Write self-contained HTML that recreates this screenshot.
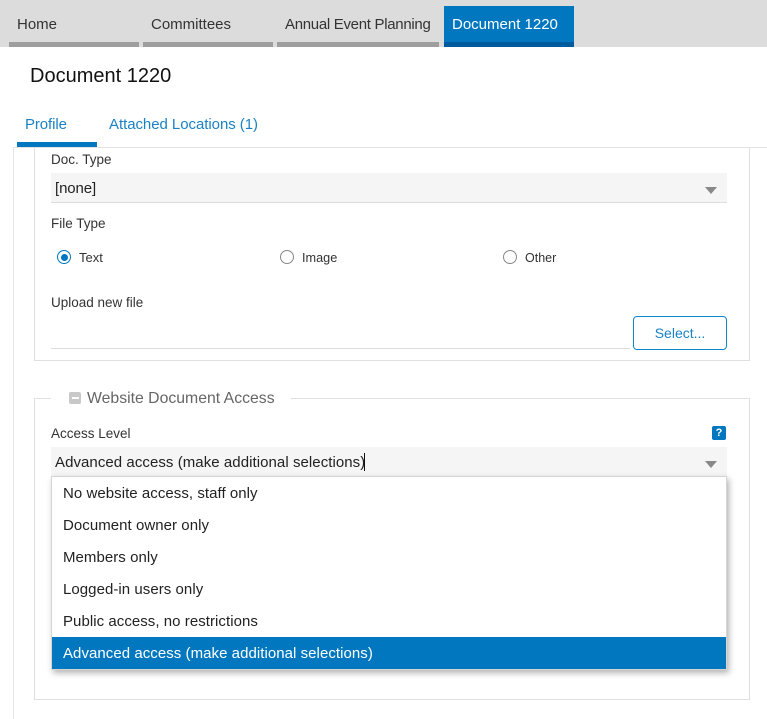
<!DOCTYPE html>
<html lang="en"><head><meta charset="utf-8"><title>Document 1220</title>
<style>
html,body{margin:0;padding:0;background:#fff;width:767px;height:719px;overflow:hidden}
body{position:relative;font-family:"Liberation Sans",sans-serif;color:#222}
div,span{position:absolute;box-sizing:border-box}
.t{white-space:nowrap;line-height:20px;height:20px}
.bar{top:42px;height:5px;background:#9e9e9e}
.lb{font-size:13.5px;color:#333}
.sel{left:51px;width:676px;background:#f5f5f5;border-bottom:1px solid #ddd}
.arrow{width:0;height:0;border-left:6.5px solid transparent;border-right:6.5px solid transparent;border-top:7px solid #888}
.radio{width:14px;height:14px;border-radius:50%;border:1.5px solid #888;background:#fff;top:250px}
.it{left:63px;font-size:15px;color:#222;letter-spacing:.05px}
</style></head><body>
<div style="left:0;top:0;width:767px;height:47px;background:#dcdcdc"></div>
<div class="bar" style="left:9px;width:130px"></div>
<div class="bar" style="left:143px;width:130px"></div>
<div class="bar" style="left:277px;width:162px"></div>
<div style="left:444px;top:6px;width:130px;height:41px;background:#0077be"></div>
<div style="left:444px;top:42px;width:130px;height:5px;background:#005a9e"></div>
<div class="t" style="left:17px;top:15px;font-size:15px;color:#333">Home</div>
<div class="t" style="left:151px;top:15px;font-size:15px;color:#333">Committees</div>
<div class="t" style="left:285px;top:15px;font-size:15px;color:#333;letter-spacing:-.3px">Annual Event Planning</div>
<div class="t" style="left:452px;top:15px;font-size:15px;color:#fff">Document 1220</div>

<div class="t" style="left:30px;top:66px;font-size:20px;color:#111">Document 1220</div>

<div class="t" style="left:25px;top:115px;font-size:15px;color:#1a82c4;letter-spacing:-.1px">Profile</div>
<div class="t" style="left:109px;top:115px;font-size:15px;color:#1a82c4;letter-spacing:-.05px">Attached Locations (1)</div>
<div style="left:17px;top:142px;width:80px;height:5px;background:#0077be"></div>
<div style="left:13px;top:147px;width:754px;height:1px;background:#e3e3e3"></div>
<div style="left:13px;top:147px;width:1px;height:572px;background:#e3e3e3"></div>

<div style="left:34px;top:147px;width:716px;height:214px;border:1px solid #e0e0e0;border-top:0"></div>
<div class="t lb" style="left:51px;top:150px">Doc. Type</div>
<div class="sel" style="top:173px;height:30px"></div>
<div class="t" style="left:55px;top:179px;font-size:15px;color:#222;letter-spacing:-.1px">[none]</div>
<div class="arrow" style="left:705px;top:187px"></div>
<div class="t lb" style="left:51px;top:214px">File Type</div>

<div class="radio" style="left:57px;border-color:#0077be"></div>
<div style="left:60.5px;top:253.5px;width:7px;height:7px;border-radius:50%;background:#0077be"></div>
<div class="t lb" style="left:79px;top:248px;font-size:13px">Text</div>
<div class="radio" style="left:279.5px"></div>
<div class="t lb" style="left:302px;top:248px;font-size:12.7px">Image</div>
<div class="radio" style="left:502.5px"></div>
<div class="t lb" style="left:525px;top:248px;font-size:12.5px">Other</div>

<div class="t lb" style="left:51px;top:293px">Upload new file</div>
<div style="left:51px;top:348px;width:579px;height:1px;background:#ddd"></div>
<div style="left:633px;top:316px;width:94px;height:34px;border:1px solid #0a86cc;border-radius:4px;background:#fff"></div>
<div class="t" style="left:633px;top:323px;width:94px;text-align:center;font-size:14px;color:#1a82c4">Select...</div>

<div style="left:34px;top:398px;width:716px;height:302px;border:1px solid #e0e0e0"></div>
<div style="left:51px;top:396px;width:240px;height:6px;background:#fff"></div>
<div style="left:69px;top:392px;width:12px;height:12px;background:#c8c8c8;border-radius:2px"></div>
<div style="left:71.5px;top:397px;width:7px;height:2px;background:#fff"></div>
<div class="t" style="left:87px;top:389px;font-size:15.8px;color:#666">Website Document Access</div>

<div class="t lb" style="left:51px;top:424px">Access Level</div>
<div style="left:712px;top:426px;width:14px;height:14px;background:#0077be;border-radius:2px"></div>
<div class="t" style="left:712px;top:423px;width:14px;text-align:center;font-size:11px;font-weight:bold;color:#fff">?</div>
<div class="sel" style="top:447px;height:30px"></div>
<div class="t" style="left:55px;top:453px;font-size:15px;color:#222;letter-spacing:.06px">Advanced access (make additional selections)</div>
<div style="left:364px;top:453px;width:1px;height:18px;background:#111"></div>
<div class="arrow" style="left:705px;top:461px"></div>

<div style="left:51px;top:476px;width:676px;height:194px;background:#fff;border:1px solid #d5d5d5;box-shadow:2px 3px 6px rgba(0,0,0,.3)"></div>
<div style="left:52px;top:637px;width:674px;height:32px;background:#0077be"></div>
<div class="t it" style="top:484px">No website access, staff only</div>
<div class="t it" style="top:516px">Document owner only</div>
<div class="t it" style="top:548px">Members only</div>
<div class="t it" style="top:580px">Logged-in users only</div>
<div class="t it" style="top:612px">Public access, no restrictions</div>
<div class="t it" style="top:644px;color:#fff">Advanced access (make additional selections)</div>
</body></html>
